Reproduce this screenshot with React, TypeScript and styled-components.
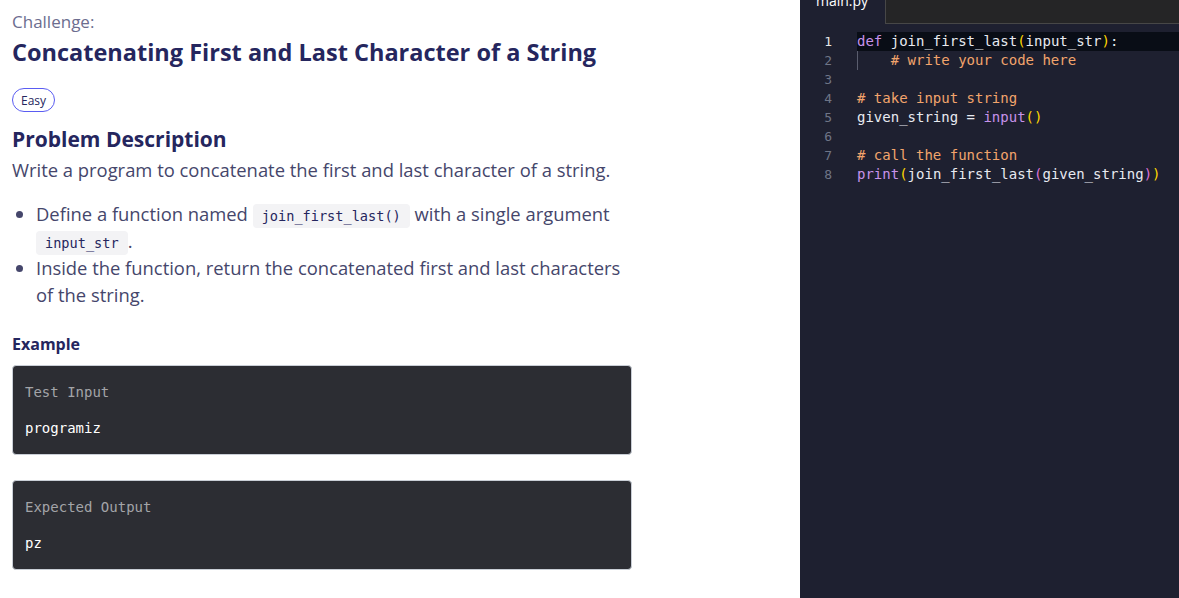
import React from "react";
import styled, { createGlobalStyle } from "styled-components";

const Global = createGlobalStyle`
  html, body { margin: 0; padding: 0; background: #ffffff; }
  body { font-family: "Open Sans", sans-serif; overflow: hidden; }
  * { box-sizing: border-box; }
`;

const Page = styled.div`
  display: flex;
  width: 1179px;
  height: 598px;
  overflow: hidden;
`;

const Problem = styled.section`
  width: 800px;
  flex: none;
  padding: 12px 0 0 12px;
  background: #ffffff;
  color: #45466b;
`;

const Column = styled.div`
  width: 620px;
  display: flex;
  flex-direction: column;
`;

const Kicker = styled.div`
  font-size: 17px;
  line-height: 20px;
  color: #6c6d8f;
`;

const Title = styled.h1`
  margin: 4px 0 0;
  font-size: 23.5px;
  line-height: 32px;
  font-weight: 700;
  color: #25265e;
`;

const Badge = styled.span`
  align-self: flex-start;
  margin-top: 20px;
  height: 24px;
  padding: 0 8px;
  display: inline-flex;
  align-items: center;
  border: 1px solid #5a5cf2;
  border-radius: 12px;
  font-size: 12px;
  color: #25265e;
`;

const Heading = styled.h2`
  margin: 13px 0 0;
  font-size: 21px;
  line-height: 28px;
  font-weight: 700;
  color: #25265e;
`;

const Para = styled.p`
  margin: 3px 0 0;
  font-size: 18.4px;
  line-height: 27px;
`;

const List = styled.ul`
  margin: 17px 0 0;
  padding-left: 24px;
  font-size: 18.4px;
  line-height: 27px;
`;

const Code = styled.code`
  font-family: "DejaVu Sans Mono", monospace;
  font-size: 13.6px;
  line-height: 14px;
  background: #f3f3f5;
  color: #25265e;
  padding: 4px 9px;
  border-radius: 4px;
`;

const SubHeading = styled.h3`
  margin: 26px 0 0;
  font-size: 16px;
  line-height: 20px;
  font-weight: 700;
  color: #25265e;
`;

const IOBox = styled.div<{ $first?: boolean }>`
  margin-top: ${(p) => (p.$first ? "11px" : "25px")};
  width: 620px;
  background: #2c2d33;
  border: 1px solid #c9ced6;
  border-radius: 4px;
  padding: 16px 12px 16px;
  display: flex;
  flex-direction: column;
  gap: 16px;
  font-family: "DejaVu Sans Mono", monospace;
  font-size: 14px;
  line-height: 20px;
`;

const IOLabel = styled.div`
  color: #a3a4a8;
`;

const IOValue = styled.div`
  color: #ffffff;
`;

const Editor = styled.section`
  flex: 1;
  background: #1e2030;
  display: flex;
  flex-direction: column;
`;

const TabBar = styled.div`
  height: 24px;
  display: flex;
  background: #252526;
`;

const Tab = styled.div`
  width: 86px;
  background: #1e2030;
  border-right: 1px solid #474747;
  padding-left: 16px;
  overflow: hidden;
`;

const TabLabel = styled.div`
  font-family: "Open Sans", sans-serif;
  font-size: 14px;
  line-height: 14px;
  margin-top: -6px;
  color: #ffffff;
`;

const TabFill = styled.div`
  flex: 1;
  border-bottom: 1px solid #474747;
`;

const Lines = styled.div`
  padding-top: 8px;
  display: flex;
  flex-direction: column;
  font-family: "DejaVu Sans Mono", monospace;
  font-size: 14px;
  line-height: 19px;
`;

const Line = styled.div`
  display: flex;
  height: 19px;
`;

const LineNo = styled.span<{ $active?: boolean }>`
  width: 32px;
  flex: none;
  text-align: right;
  font-size: 13px;
  color: ${(p) => (p.$active ? "#e6e6e6" : "#6f7587")};
`;

const LineCode = styled.span<{ $active?: boolean; $guide?: boolean }>`
  margin-left: 25px;
  flex: 1;
  white-space: pre;
  color: #e8eaf0;
  background: ${(p) => (p.$active ? "#090d16" : "transparent")};
  box-shadow: ${(p) => (p.$guide ? "inset 1px 0 0 #5a5d6e" : "none")};
`;

const Kw = styled.span`
  color: #c792ea;
`;
const Cm = styled.span`
  color: #f2a46c;
`;
const P1 = styled.span`
  color: #ffd700;
`;
const P2 = styled.span`
  color: #da70d6;
`;

export default function App() {
  return (
    <Page>
      <Global />
      <Problem>
        <Column>
          <Kicker>Challenge:</Kicker>
          <Title>Concatenating First and Last Character of a String</Title>
          <Badge>Easy</Badge>
          <Heading>Problem Description</Heading>
          <Para>Write a program to concatenate the first and last character of a string.</Para>
          <List>
            <li>
              Define a function named <Code>join_first_last()</Code> with a single argument{" "}
              <Code>input_str</Code>.
            </li>
            <li>Inside the function, return the concatenated first and last characters of the string.</li>
          </List>
          <SubHeading>Example</SubHeading>
          <IOBox $first>
            <IOLabel>Test Input</IOLabel>
            <IOValue>programiz</IOValue>
          </IOBox>
          <IOBox>
            <IOLabel>Expected Output</IOLabel>
            <IOValue>pz</IOValue>
          </IOBox>
        </Column>
      </Problem>
      <Editor>
        <TabBar>
          <Tab>
            <TabLabel>main.py</TabLabel>
          </Tab>
          <TabFill />
        </TabBar>
        <Lines>
          <Line>
            <LineNo $active>1</LineNo>
            <LineCode $active>
              <Kw>def</Kw> join_first_last<P1>(</P1>input_str<P1>)</P1>:
            </LineCode>
          </Line>
          <Line>
            <LineNo>2</LineNo>
            <LineCode $guide>
              {"    "}
              <Cm># write your code here</Cm>
            </LineCode>
          </Line>
          <Line>
            <LineNo>3</LineNo>
            <LineCode> </LineCode>
          </Line>
          <Line>
            <LineNo>4</LineNo>
            <LineCode>
              <Cm># take input string</Cm>
            </LineCode>
          </Line>
          <Line>
            <LineNo>5</LineNo>
            <LineCode>
              given_string = <Kw>input</Kw>
              <P1>()</P1>
            </LineCode>
          </Line>
          <Line>
            <LineNo>6</LineNo>
            <LineCode> </LineCode>
          </Line>
          <Line>
            <LineNo>7</LineNo>
            <LineCode>
              <Cm># call the function</Cm>
            </LineCode>
          </Line>
          <Line>
            <LineNo>8</LineNo>
            <LineCode>
              <Kw>print</Kw>
              <P1>(</P1>join_first_last<P2>(</P2>given_string<P2>)</P2>
              <P1>)</P1>
            </LineCode>
          </Line>
        </Lines>
      </Editor>
    </Page>
  );
}
